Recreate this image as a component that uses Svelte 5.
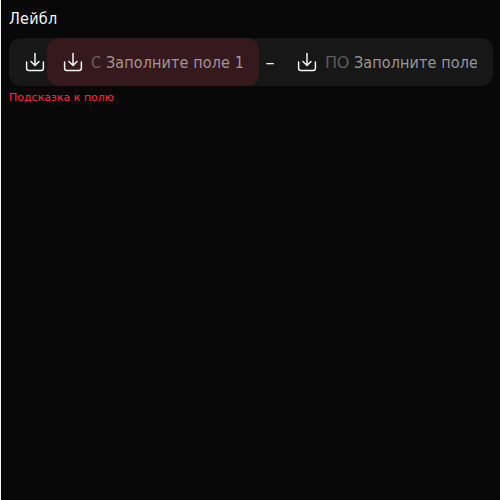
{#snippet download()}
  <svg class="icon" width="24" height="24" viewBox="0 0 24 24" fill="none">
    <path d="M12 3.4V15.3M8 11.5L12 15.5L16 11.5M3.6 12V18.2Q3.6 20.4 5.8 20.4H18.2Q20.4 20.4 20.4 18.2V12" stroke="currentColor" stroke-width="1.5" stroke-linecap="round" stroke-linejoin="round" />
  </svg>
{/snippet}

<main>
  <label class="label" for="from">Лейбл</label>
  <div class="range">
    <div class="leading">{@render download()}</div>
    <div class="field error">
      {@render download()}
      <span class="before from">С</span>
      <input id="from" placeholder="Заполните поле 1" />
    </div>
    <span class="dash">–</span>
    <div class="field second">
      {@render download()}
      <span class="before to">ПО</span>
      <input placeholder="Заполните поле 2" />
    </div>
  </div>
  <div class="hint">Подсказка к полю</div>
</main>

<style>
  :global(body) { margin: 0; background: #080808; overflow: hidden; }
  main {
    box-sizing: border-box;
    height: 500px;
    padding: 9px 7px 0 8px;
    border-left: 1px solid #f5f5f5;
    background: #080808;
    color: #f5f5f5;
    font-family: "DejaVu Sans Condensed", "DejaVu Sans", sans-serif;
  }
  .label {
    display: block;
    height: 20px;
    margin-bottom: 9px;
    font-size: 16px;
    line-height: 20px;
    letter-spacing: 0.25px;
  }
  .range {
    display: flex;
    align-items: center;
    height: 48px;
    border-radius: 12px;
    background: #171717;
    overflow: hidden;
    font-size: 16px;
  }
  .leading { display: flex; flex: none; padding-left: 14px; }
  .icon { flex: none; display: block; }
  .field {
    box-sizing: border-box;
    display: flex;
    align-items: center;
    flex: none;
    width: 212px;
    height: 48px;
    padding: 0 14px;
    border-radius: 12px;
  }
  .error { background: #35191c; }
  .second { padding-right: 16px; }
  .before { flex: none; margin-left: 6px; line-height: 22px; padding-top: 1px; letter-spacing: 1px; }
  .from { width: 15px; color: #725e60; }
  .to { width: 29px; color: #5b5b5b; font-family: "DejaVu Sans", sans-serif; letter-spacing: -0.3px; }
  input {
    flex: 1;
    min-width: 0;
    height: 22px;
    padding: 0;
    border: 0;
    outline: 0;
    background: transparent;
    color: inherit;
    font: inherit;
    letter-spacing: 0.12px;
  }
  input::placeholder { color: #979797; opacity: 1; }
  .error input::placeholder { color: #a39596; }
  .dash { flex: none; width: 22px; text-align: center; font-family: "DejaVu Sans", sans-serif; font-size: 18px; line-height: 22px; }
  .hint {
    margin-top: 5px;
    color: #ff293e;
    font-family: "DejaVu Sans", sans-serif;
    font-size: 11px;
    line-height: 14px;
  }
</style>
